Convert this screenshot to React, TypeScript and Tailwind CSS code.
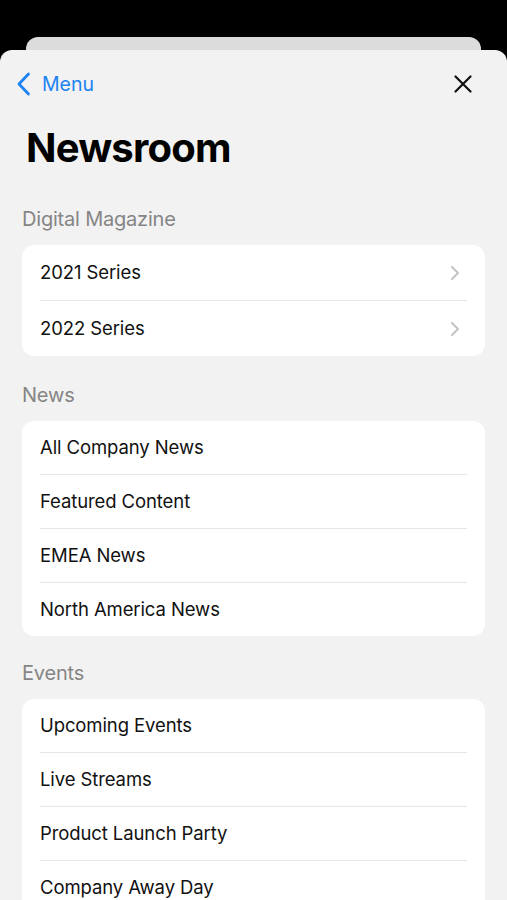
import React from 'react';

const font = { fontFamily: 'Inter, "Noto Sans", sans-serif' };

type Section = { title: string; items: string[]; chevron?: boolean };

const sections: Section[] = [
  { title: 'Digital Magazine', items: ['2021 Series', '2022 Series'], chevron: true },
  { title: 'News', items: ['All Company News', 'Featured Content', 'EMEA News', 'North America News'] },
  { title: 'Events', items: ['Upcoming Events', 'Live Streams', 'Product Launch Party', 'Company Away Day'] },
];

const gaps = ['mt-[35px]', 'mt-[27px]', 'mt-[25px]'];

const Chevron = () => (
  <svg width="10" height="16" viewBox="0 0 10 16" fill="none">
    <path d="M2 2l6 6-6 6" stroke="#c3c3c7" strokeWidth="2" strokeLinecap="round" strokeLinejoin="round" />
  </svg>
);

export default function App() {
  return (
    <div className="w-[507px] h-[900px] bg-black overflow-hidden flex flex-col" style={font}>
      {/* stacked sheet behind */}
      <div className="h-[50px] pt-[37px] px-[26px] shrink-0">
        <div className="h-[13px] bg-[#dcdcdc] rounded-t-[12px]" />
      </div>

      <div className="flex-1 bg-[#f2f2f2] rounded-t-[12px] px-[22px]">
        {/* nav */}
        <div className="h-[68px] flex items-center justify-between -mx-[22px] pl-[17px] pr-[35px]">
          <div className="flex items-center gap-[11px] text-[#1c83f5]">
            <svg width="14" height="24" viewBox="0 0 14 24" fill="none">
              <path d="M11.5 2L2 12l9.5 10" stroke="#1c83f5" strokeWidth="2.8" strokeLinecap="round" strokeLinejoin="round" />
            </svg>
            <span className="text-[19.5px] leading-none pt-[2px]">Menu</span>
          </div>
          <svg width="18" height="18" viewBox="0 0 18 18" fill="none">
            <path d="M1.5 1.5l15 15M16.5 1.5l-15 15" stroke="#111" strokeWidth="2.2" strokeLinecap="round" />
          </svg>
        </div>

        <h1 className="mt-[6px] pl-[4px] text-[40px] leading-[48px] font-bold text-black tracking-[-0.8px]">Newsroom</h1>

        {sections.map((s, si) => (
          <div key={s.title} className={gaps[si]}>
            <div className="text-[20px] leading-[24px] text-[#858585] tracking-[-0.2px]">{s.title}</div>
            <div className="mt-[14px] bg-white rounded-[12px] overflow-hidden">
              {s.items.map((item, i) => (
                <div key={item}>
                  {i > 0 && <div className="mx-[18px] h-px bg-[#e6e6e6]" />}
                  <div
                    className={`flex items-center justify-between pl-[18px] pr-[25px] ${
                      s.chevron ? 'h-[55px]' : 'h-[53px]'
                    }`}
                  >
                    <span className="text-[18.5px] text-[#111] tracking-[-0.1px]">{item}</span>
                    {s.chevron && <Chevron />}
                  </div>
                </div>
              ))}
            </div>
          </div>
        ))}
      </div>
    </div>
  );
}
